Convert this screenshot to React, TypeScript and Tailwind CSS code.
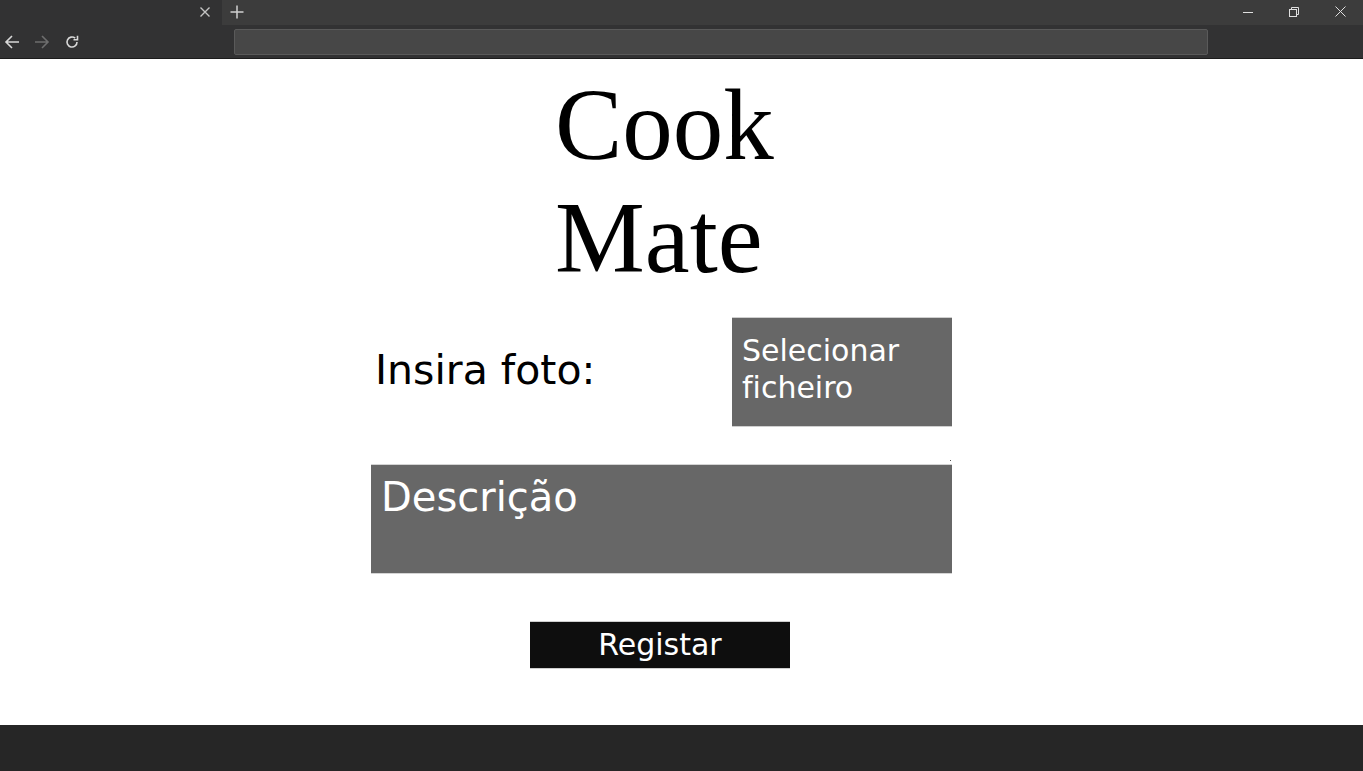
import React from "react";

const sans = "font-['DejaVu_Sans',Verdana,sans-serif] [font-variant-ligatures:none]";

const BrowserChrome: React.FC = () => (
  <div className="w-full select-none">
    {/* tab strip */}
    <div className="flex h-[25px] bg-[#3c3c3c]">
      <div className="relative flex w-[222px] items-center justify-end bg-[#323233] pr-[11px] pb-[1px]">
        <svg width="12" height="12" viewBox="0 0 12 12" className="text-[#c4c4c4]">
          <path d="M1.5 1.5 L10.5 10.5 M10.5 1.5 L1.5 10.5" stroke="currentColor" strokeWidth="1.4" />
        </svg>
      </div>
      <div className="flex w-[30px] items-center justify-center pb-[2px]">
        <svg width="14" height="14" viewBox="0 0 14 14" className="text-[#d0d0d0]">
          <path d="M7 0.5 V13.5 M0.5 7 H13.5" stroke="currentColor" strokeWidth="1.5" />
        </svg>
      </div>
      <div className="flex-1" />
      <div className="flex items-center pb-[2px]">
        <div className="flex w-[46px] justify-center">
          <svg width="10" height="10" viewBox="0 0 10 10" className="text-[#e0e0e0]">
            <path d="M0 5.5 H10" stroke="currentColor" strokeWidth="1" />
          </svg>
        </div>
        <div className="flex w-[46px] justify-center">
          <svg width="10" height="10" viewBox="0 0 10 10" className="text-[#e0e0e0]">
            <rect x="0.5" y="2.5" width="7" height="7" fill="none" stroke="currentColor" strokeWidth="1" />
            <path d="M2.5 2.5 V0.5 H9.5 V7.5 H7.5" fill="none" stroke="currentColor" strokeWidth="1" />
          </svg>
        </div>
        <div className="flex w-[46px] justify-center">
          <svg width="11" height="11" viewBox="0 0 11 11" className="text-[#e0e0e0]">
            <path d="M0.5 0.5 L10.5 10.5 M10.5 0.5 L0.5 10.5" stroke="currentColor" strokeWidth="1" />
          </svg>
        </div>
      </div>
    </div>
    {/* toolbar */}
    <div className="flex h-[34px] items-center border-b border-[#1c1c1c] bg-[#323233]">
      <div className="flex w-[234px] items-center gap-[14px] pl-[4px] pt-[1px]">
        <svg width="16" height="16" viewBox="0 0 16 16" className="text-[#d8d8d8]">
          <path d="M15 8 H2 M8 2 L2 8 L8 14" fill="none" stroke="currentColor" strokeWidth="1.6" />
        </svg>
        <svg width="16" height="16" viewBox="0 0 16 16" className="text-[#6e6e6e]">
          <path d="M1 8 H14 M8 2 L14 8 L8 14" fill="none" stroke="currentColor" strokeWidth="1.6" />
        </svg>
        <svg width="16" height="16" viewBox="0 0 16 16" className="text-[#d8d8d8]">
          <path d="M13 8 A5 5 0 1 1 11.2 4.2" fill="none" stroke="currentColor" strokeWidth="1.6" />
          <path d="M13.5 1.8 V5.8 H9.5" fill="none" stroke="currentColor" strokeWidth="1.6" />
        </svg>
      </div>
      <div className="h-[26px] w-[974px] rounded-[2px] border border-[#5a5a5a] bg-[#474747]" />
    </div>
  </div>
);

export default function App() {
  return (
    <div className="flex h-[771px] w-full flex-col overflow-hidden bg-white">
      <BrowserChrome />
      <main className="flex h-[666px] flex-col pt-[10px]">
        <div className="ml-[371px] flex w-[581px] flex-col">
          <h1 className="pl-[184px] font-['Liberation_Serif','Times_New_Roman',serif] text-[101px] leading-[113px] font-normal text-black">
            Cook
            <br />
            Mate
          </h1>

          <div className="mt-[22px] flex items-start justify-between">
            <span className={`${sans} mt-[30px] pl-[4px] text-[41px] leading-[47px] text-black`}>Insira foto:</span>
            <div
              className={`${sans} h-[110px] w-[220px] border-y border-[#cfcfcf] bg-[#676767] pl-[10px] pt-[14px] text-[30px] leading-[37px] text-white`}
            >
              Selecionar
              <br />
              ficheiro
            </div>
          </div>

          <div className="relative mt-[37px] h-[110px] border-y border-[#d4d4d4] bg-[#676767] pl-[10px] pt-[9px]">
            <span className={`${sans} text-[40px] leading-[47px] text-white`}>Descrição</span>
            <div className="absolute -top-[5px] right-[1px] h-[1px] w-[1px] bg-[#555]" />
          </div>

          <div className="mt-[47px] flex">
            <button
              className={`${sans} ml-[159px] h-[48px] w-[260px] border-y border-[#cfcfcf] bg-[#0e0e0e] text-[30px] leading-[46px] text-white`}
            >
              Registar
            </button>
          </div>
        </div>
      </main>
      <footer className="h-[46px] bg-[#262626]" />
    </div>
  );
}
